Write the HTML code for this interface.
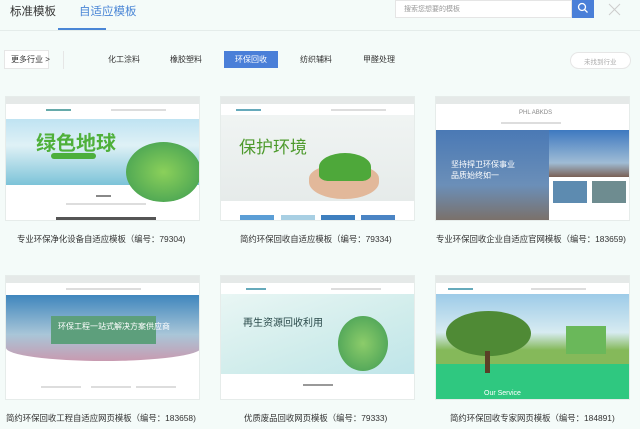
<!DOCTYPE html>
<html><head><meta charset="utf-8"><style>
*{margin:0;padding:0;box-sizing:border-box}
body{width:640px;height:429px;overflow:hidden;background:#f4fbf9;font-family:"Liberation Sans","Noto Sans CJK SC",sans-serif;position:relative;color:#333}
.a{position:absolute}
.t{font-size:11px;white-space:nowrap}
.card{position:absolute;background:#fff;border:1px solid #e6ecea;overflow:hidden}
.bar{position:absolute;left:0;right:0;top:0;height:7px;background:#e5e9e8}
.cap{position:absolute;font-size:8.4px;white-space:nowrap;color:#333}
.nav{position:absolute;height:2px;background:#ddd}
</style></head><body>
<div class="a t" style="left:10px;top:3px;font-size:11.5px">标准模板</div>
<div class="a t" style="left:79px;top:3px;font-size:11.5px;color:#4a86d6">自适应模板</div>
<div class="a" style="left:58px;top:28px;width:48px;height:2px;background:#4a86d6"></div>
<div class="a" style="left:0;top:30px;width:640px;height:1px;background:#e4ecea"></div>
<div class="a" style="left:395px;top:0;width:177px;height:18px;background:#fff;border:1px solid #e5e5e5"></div>
<div class="a t" style="left:404px;top:4px;font-size:7px;color:#999">搜索您想要的模板</div>
<div class="a" style="left:572px;top:0;width:22px;height:18px;background:#4a7fd8"></div>
<svg class="a" style="left:577px;top:2px" width="12" height="12" viewBox="0 0 12 12"><circle cx="5" cy="5" r="3.5" stroke="#fff" stroke-width="1.3" fill="none"/><path d="M7.6 7.6L10.5 10.5" stroke="#fff" stroke-width="1.3"/></svg>
<svg class="a" style="left:608px;top:3px" width="13" height="13" viewBox="0 0 13 13"><path d="M1 1L12 12M12 1L1 12" stroke="#ccc" stroke-width="1"/></svg>

<div class="a" style="left:4px;top:50px;width:45px;height:19px;background:#fff;border:1px solid #e6e6e6"></div>
<div class="a t" style="left:11px;top:54px;font-size:8px">更多行业 &gt;</div>
<div class="a" style="left:63px;top:51px;width:1px;height:18px;background:#e6e6e6"></div>
<div class="a t" style="left:108px;top:54px;font-size:8px">化工涂料</div>
<div class="a t" style="left:170px;top:54px;font-size:8px">橡胶塑料</div>
<div class="a" style="left:224px;top:51px;width:54px;height:17px;background:#4a7fd8"></div>
<div class="a t" style="left:235px;top:54px;font-size:8px;color:#fff">环保回收</div>
<div class="a t" style="left:300px;top:54px;font-size:8px">纺织辅料</div>
<div class="a t" style="left:363px;top:54px;font-size:8px">甲醛处理</div>
<div class="a" style="left:570px;top:52px;width:61px;height:17px;border:1px solid #e6e6e6;border-radius:9px;background:#fff"></div>
<div class="a t" style="left:584px;top:56px;font-size:6.5px;color:#aaa">未找到行业</div>

<!-- top row -->
<div class="card" style="left:5px;top:96px;width:195px;height:125px">
 <div class="bar"></div>
 <div class="nav" style="left:40px;top:12px;width:25px;background:#6aa"></div>
 <div class="nav" style="left:105px;top:12px;width:55px"></div>
 <div class="a" style="left:0;top:22px;width:195px;height:66px;background:linear-gradient(180deg,#bfe3f2,#dff1f6 40%,#7cc3d8 100%)"></div>
 <div class="a" style="left:120px;top:45px;width:75px;height:60px;border-radius:50%;background:radial-gradient(#8bd05a,#3a9a52)"></div>
 <div class="a t" style="left:30px;top:30px;font-size:20px;color:#4fb03a;font-weight:bold">绿色地球</div>
 <div class="a" style="left:45px;top:56px;width:45px;height:6px;border-radius:3px;background:#4caf3c"></div>
 <div class="nav" style="left:90px;top:98px;width:15px;background:#888"></div>
 <div class="nav" style="left:60px;top:106px;width:80px"></div>
 <div class="a" style="left:50px;top:120px;width:100px;height:3px;background:#555"></div>
</div>
<div class="card" style="left:220px;top:96px;width:195px;height:125px">
 <div class="bar"></div>
 <div class="nav" style="left:15px;top:12px;width:25px;background:#6ab"></div>
 <div class="nav" style="left:110px;top:12px;width:55px"></div>
 <div class="a" style="left:0;top:18px;width:195px;height:86px;background:linear-gradient(180deg,#f0f4f3,#e6ebea)"></div>
 <div class="a t" style="left:18px;top:36px;font-size:17px;color:#4d9a2c">保护环境</div>
 <div class="a" style="left:88px;top:68px;width:70px;height:34px;border-radius:40% 40% 50% 50%;background:#e2b89a"></div>
 <div class="a" style="left:98px;top:56px;width:52px;height:28px;border-radius:50% 50% 20% 20%;background:#4ea83a"></div>
 <div class="a" style="left:19px;top:118px;width:34px;height:8px;background:#5b9ed6"></div>
 <div class="a" style="left:60px;top:118px;width:34px;height:8px;background:#a8cfe3"></div>
 <div class="a" style="left:100px;top:118px;width:34px;height:8px;background:#3e7fbf"></div>
 <div class="a" style="left:140px;top:118px;width:34px;height:8px;background:#4a84c4"></div>
</div>
<div class="card" style="left:435px;top:96px;width:195px;height:125px">
 <div class="bar"></div>
 <div class="a t" style="left:83px;top:13px;font-size:6px;color:#888">PHL ABKDS</div>
 <div class="nav" style="left:65px;top:25px;width:60px"></div>
 <div class="a" style="left:0;top:33px;width:113px;height:92px;background:linear-gradient(180deg,#4a79b5,#6b8fb8 60%,#7b6f66)"></div>
 <div class="a" style="left:113px;top:33px;width:82px;height:47px;background:linear-gradient(180deg,#3e79c0,#9fbcd5 70%,#7a6055)"></div>
 <div class="a" style="left:117px;top:84px;width:34px;height:22px;background:#5d8bb0"></div>
 <div class="a" style="left:156px;top:84px;width:34px;height:22px;background:#6e8c90"></div>
 <div class="a t" style="left:15px;top:62px;font-size:8px;color:#fff">坚持捍卫环保事业<br>品质始终如一</div>
</div>
<div class="cap" style="left:17px;top:233px">专业环保净化设备自适应模板（编号：79304)</div>
<div class="cap" style="left:240px;top:233px">简约环保回收自适应模板（编号：79334)</div>
<div class="cap" style="left:436px;top:233px">专业环保回收企业自适应官网模板（编号：183659)</div>

<!-- bottom row -->
<div class="card" style="left:5px;top:275px;width:195px;height:125px">
 <div class="bar"></div>
 <div class="nav" style="left:60px;top:12px;width:75px"></div>
 <div class="a" style="left:0;top:19px;width:195px;height:66px;background:linear-gradient(180deg,#3f86bd,#a9c6d8 60%,#c89ab0);border-radius:0 0 50% 50%/0 0 20% 20%"></div>
 <div class="a" style="left:45px;top:40px;width:105px;height:28px;background:#5d9f7c"></div>
 <div class="a t" style="left:52px;top:45px;font-size:8px;color:#fff">环保工程一站式解决方案供应商</div>
 <div class="nav" style="left:35px;top:110px;width:40px"></div>
 <div class="nav" style="left:85px;top:110px;width:40px"></div>
 <div class="nav" style="left:130px;top:110px;width:40px"></div>
</div>
<div class="card" style="left:220px;top:275px;width:195px;height:125px">
 <div class="bar"></div>
 <div class="nav" style="left:25px;top:12px;width:20px;background:#6ab"></div>
 <div class="nav" style="left:110px;top:12px;width:50px"></div>
 <div class="a" style="left:0;top:18px;width:195px;height:80px;background:linear-gradient(160deg,#e9f6f4,#cfeceb 60%,#bfe5ea)"></div>
 <div class="a t" style="left:22px;top:38px;font-size:10px;color:#2a4a4a">再生资源回收利用</div>
 <div class="a" style="left:117px;top:40px;width:50px;height:55px;border-radius:50%;background:radial-gradient(#8ccc6a,#3f9b54)"></div>
 <div class="nav" style="left:82px;top:108px;width:30px;background:#999"></div>
</div>
<div class="card" style="left:435px;top:275px;width:195px;height:125px">
 <div class="bar"></div>
 <div class="nav" style="left:12px;top:12px;width:25px;background:#6ab"></div>
 <div class="nav" style="left:95px;top:12px;width:55px"></div>
 <div class="a" style="left:0;top:18px;width:195px;height:70px;background:linear-gradient(180deg,#9dcbe8,#d7ebf1 55%,#85b95a 80%)"></div>
 <div class="a" style="left:0;top:88px;width:195px;height:37px;background:#2fc880"></div>
 <div class="a" style="left:10px;top:35px;width:85px;height:45px;border-radius:50%;background:#4f8a35"></div>
 <div class="a" style="left:49px;top:75px;width:5px;height:22px;background:#5a4027"></div>
 <div class="a" style="left:130px;top:50px;width:40px;height:28px;background:#6ab85a"></div>
 <div class="a t" style="left:48px;top:114px;font-size:7px;color:#fff">Our Service</div>
</div>
<div class="cap" style="left:6px;top:412px">简约环保回收工程自适应网页模板（编号：183658)</div>
<div class="cap" style="left:244px;top:412px">优质废品回收网页模板（编号：79333)</div>
<div class="cap" style="left:450px;top:412px">简约环保回收专家网页模板（编号：184891)</div>
</body></html>
